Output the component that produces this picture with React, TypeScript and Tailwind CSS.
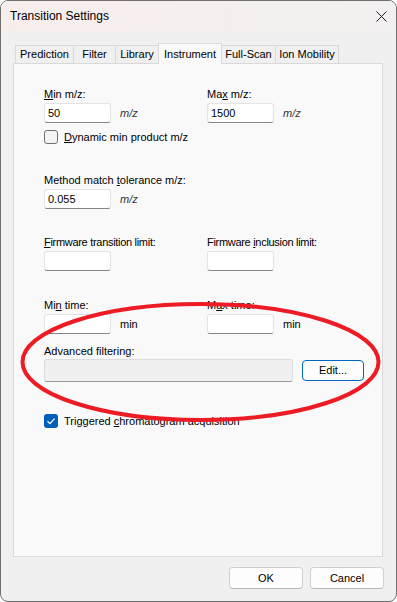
import type { ReactNode } from 'react';

interface TabProps {
	label: string;
	width: string;
	selected?: boolean;
	first?: boolean;
}

/** One tab of the strip; the selected one is taller and merges into the page. */
function Tab({ label, width, selected, first }: TabProps) {
	if (selected) {
		return (
			<div
				className={`relative z-10 -ml-px flex h-[21px] ${width} items-center justify-center border border-b-0 border-[#d9d9d9] bg-[#f9f9f9]`}
			>
				{label}
			</div>
		);
	}
	return (
		<div
			className={`flex h-[19px] ${width} items-center justify-center border border-[#d9d9d9] bg-[#f0f0f0] ${first ? '' : '-ml-px'}`}
		>
			{label}
		</div>
	);
}

function TextBox({ value }: { value?: string }) {
	return (
		<div className="h-[20px] w-[67px] rounded-[3px] border border-[#e3e3e3] border-b-[#868686] bg-white px-[3px] leading-[18px]">
			{value}
		</div>
	);
}

function Label({ children, className }: { children: ReactNode; className?: string }) {
	return <div className={`h-[13px] leading-[15px] ${className ?? ''}`}>{children}</div>;
}

function Field({ label, value, unit, labelClass }: { label: ReactNode; value?: string; unit?: ReactNode; labelClass?: string }) {
	return (
		<div>
			<Label className={labelClass}>{label}</Label>
			<div className="mt-[3px] flex items-center">
				<TextBox value={value} />
				{unit && <span className="ml-[9px]">{unit}</span>}
			</div>
		</div>
	);
}

function CheckBox({ checked, children }: { checked?: boolean; children: ReactNode }) {
	return (
		<div className="flex h-[14px] items-center gap-[6px]">
			{checked ? (
				<div className="flex h-[14px] w-[14px] items-center justify-center rounded-[3px] bg-[#005fb8]">
					<svg width="10" height="10" viewBox="0 0 10 10">
						<path d="M1.5 5.2 L4 7.6 L8.6 2.6" fill="none" stroke="#fff" strokeWidth="1.3" />
					</svg>
				</div>
			) : (
				<div className="h-[14px] w-[14px] rounded-[3px] border border-[#707070] bg-[#f4f4f4]" />
			)}
			<span className="leading-[13px]">{children}</span>
		</div>
	);
}

const mz = <span className="italic text-[#333]">m/z</span>;

export default function App() {
	return (
		<div className="relative h-[602px] w-[397px] overflow-hidden rounded-[8px] border border-[#6f6f6f] bg-[#f0f0f0] font-['Liberation_Sans',Arial,sans-serif] text-[11px] text-black">
			{/* title bar */}
			<div className="flex h-[30px] items-center justify-between bg-linear-to-r from-[#f7eeec] to-[#f2f0f0] pl-[9px] pr-[9px]">
				<span className="text-[12px]">Transition Settings</span>
				<svg width="11" height="11" viewBox="0 0 11 11">
					<path d="M0.5 0.5 L10.5 10.5 M10.5 0.5 L0.5 10.5" stroke="#1a1a1a" strokeWidth="1" />
				</svg>
			</div>

			<div className="pl-[12px]">
				{/* tab strip */}
				<div className="relative z-10 -mb-px ml-[2px] mt-[12px] flex h-[21px] items-end">
					<Tab label="Prediction" width="w-[59px]" first />
					<Tab label="Filter" width="w-[43px]" />
					<Tab label="Library" width="w-[44px]" />
					<Tab label="Instrument" width="w-[64px]" selected />
					<Tab label="Full-Scan" width="w-[55px]" />
					<Tab label="Ion Mobility" width="w-[64px]" />
				</div>

				{/* tab page */}
				<div className="h-[494px] w-[370px] border border-[#d9d9d9] bg-[#f9f9f9] pl-[30px] pt-[23px]">
					<div className="flex">
						<div className="w-[163px]">
							<Field label={<><u>M</u>in m/z:</>} value="50" unit={mz} />
						</div>
						<Field label={<>Ma<u>x</u> m/z:</>} value="1500" unit={mz} />
					</div>

					<div className="mt-[7px]">
						<CheckBox>
							<u>D</u>ynamic min product m/z
						</CheckBox>
					</div>

					<div className="mt-[29px]">
						<Field label={<>Method match <u>t</u>olerance m/z:</>} value="0.055" unit={mz} />
					</div>

					<div className="mt-[26px] flex">
						<div className="w-[163px]">
							<Field label={<><u>F</u>irmware transition limit:</>} labelClass="tracking-[-0.3px]" />
						</div>
						<Field label={<>Firmware <u>i</u>nclusion limit:</>} labelClass="tracking-[-0.3px]" />
					</div>

					<div className="mt-[27px] flex">
						<div className="w-[163px]">
							<Field label={<>Mi<u>n</u> time:</>} unit="min" />
						</div>
						<Field label={<>M<u>a</u>x time:</>} unit="min" />
					</div>

					<div className="mt-[10px]">
						<Label>Advanced filtering:</Label>
						<div className="mt-[2px] flex items-center gap-[9px]">
							<div className="h-[23px] w-[249px] rounded-[3px] border border-[#dcdcdc] border-b-[#9a9a9a] bg-[#f0f0f0]" />
							<div className="flex h-[21px] w-[62px] items-center justify-center rounded-[4px] border border-[#0067c0] bg-[#fdfdfd]">
								Edit...
							</div>
						</div>
					</div>

					<div className="mt-[32px]">
						<CheckBox checked>
							Triggered <u>c</u>hromatogram acquisition
						</CheckBox>
					</div>
				</div>
			</div>

			{/* dialog buttons */}
			<div className="mt-[10px] flex justify-end gap-[7px] pr-[12px]">
				<div className="flex h-[22px] w-[74px] items-center justify-center rounded-[4px] border border-[#d0d0d0] border-b-[#b8b8b8] bg-[#fdfdfd]">
					OK
				</div>
				<div className="flex h-[22px] w-[74px] items-center justify-center rounded-[4px] border border-[#d0d0d0] border-b-[#b8b8b8] bg-[#fdfdfd]">
					Cancel
				</div>
			</div>

			{/* hand-drawn annotation */}
			<svg className="pointer-events-none absolute left-[-1px] top-[-1px]" width="397" height="602" viewBox="0 0 397 602">
				<ellipse cx="200.5" cy="362" rx="178" ry="58" fill="none" stroke="#ed1c24" strokeWidth="4" />
			</svg>
		</div>
	);
}
